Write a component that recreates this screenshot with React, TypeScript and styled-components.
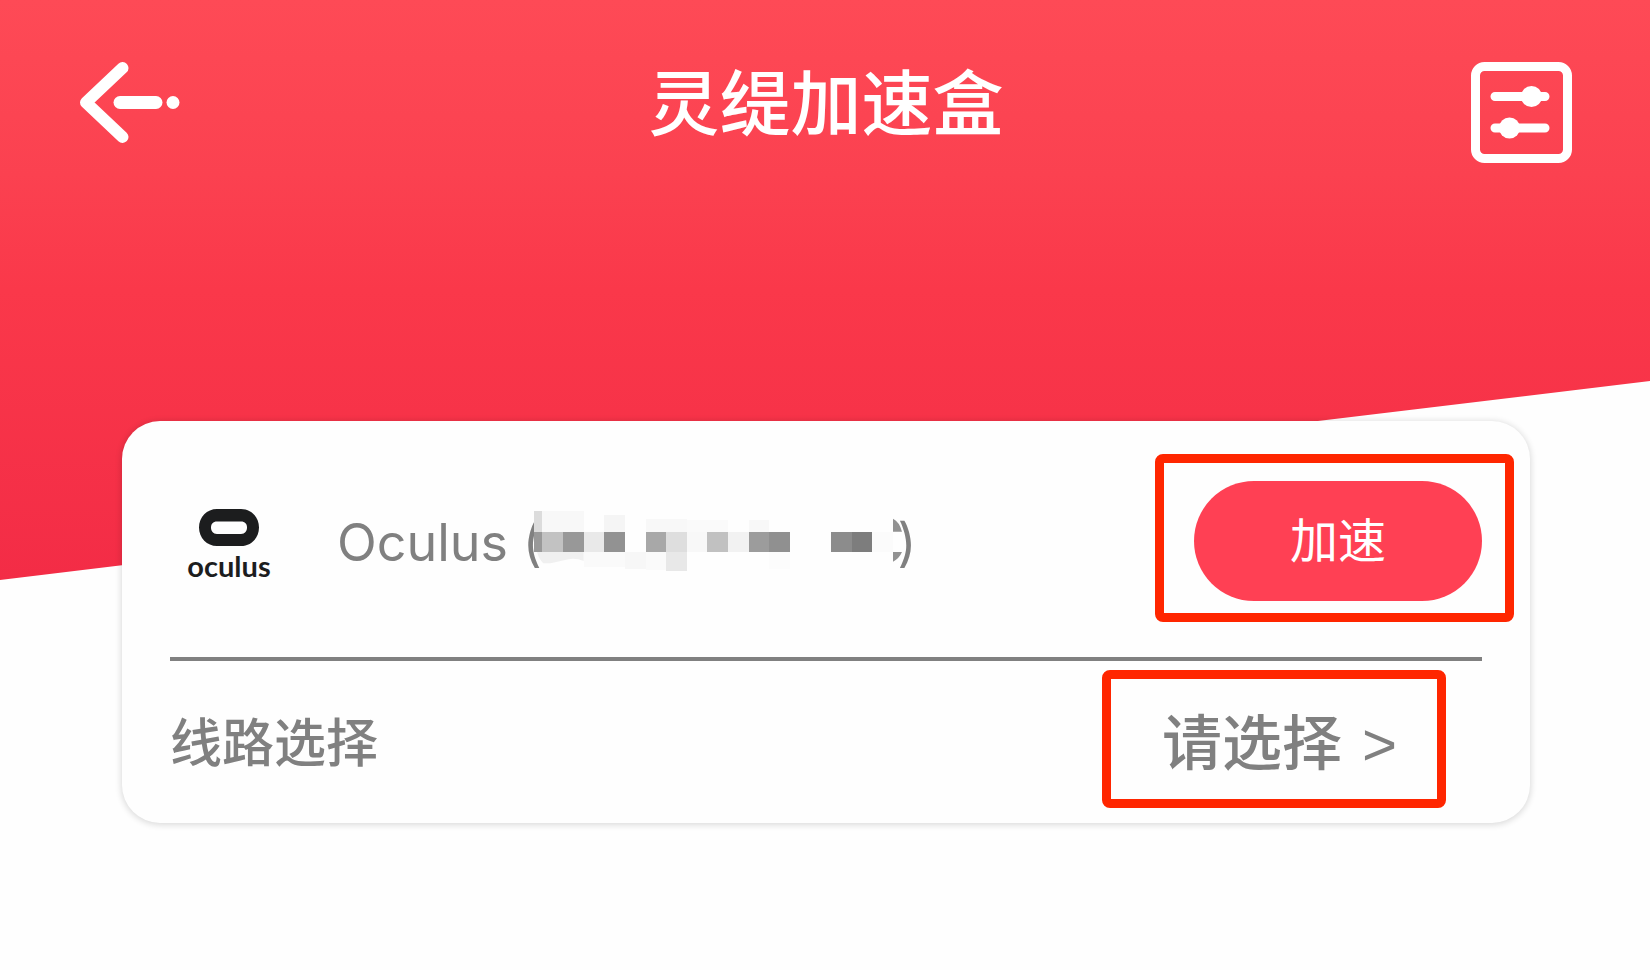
import React from "react";
import styled, { createGlobalStyle } from "styled-components";

const GlobalStyle = createGlobalStyle`
  *, *::before, *::after { box-sizing: border-box; }
  body {
    margin: 0;
    background: #fefefe;
    font-family: Inter, "Noto Sans CJK SC", sans-serif;
  }
  button {
    margin: 0;
    padding: 0;
    border: 0;
    background: none;
    font-family: inherit;
    cursor: pointer;
  }
`;

const Page = styled.div`
  min-height: 100vh;
`;

const Hero = styled.header`
  height: 580px;
  background: linear-gradient(#fe4a56 0%, #fb4150 30%, #fa384a 50%, #f32c46 100%);
  clip-path: polygon(0 0, 100% 0, 100% 381px, 0 100%);
`;

const TitleBar = styled.div`
  display: grid;
  grid-template-columns: 1fr auto 1fr;
  align-items: start;
  padding: 62px 78px 0 80px;
`;

const Title = styled.h1`
  margin: 0;
  color: #fff;
  font-size: 71px;
  font-weight: 500;
  line-height: 82px;
`;

const IconButton = styled.button<{ $end?: boolean }>`
  justify-self: ${(p) => (p.$end ? "end" : "start")};
  color: #fff;
  svg { display: block; }
`;

const Card = styled.main`
  position: relative;
  margin: -159px 120px 0 122px;
  border-radius: 38px;
  background: #fefefe;
  box-shadow: 0 1px 6px 1px rgba(0, 0, 0, 0.14);
`;

const Row = styled.section<{ $pad: string }>`
  display: flex;
  align-items: center;
  padding: ${(p) => p.$pad};
`;

const Divider = styled.hr`
  height: 4px;
  margin: 0 48px;
  border: 0;
  background: #808080;
`;

const Logo = styled.div`
  display: flex;
  flex-direction: column;
  align-items: center;
  width: 84px;
  margin-right: 66px;
  padding-top: 18px;
  color: #1c1d1e;
  svg { display: block; }
`;

const LogoName = styled.span`
  font-family: Lato, sans-serif;
  font-size: 29px;
  font-weight: 700;
  line-height: 40px;
`;

const Name = styled.h2`
  display: flex;
  flex: 1;
  align-items: center;
  margin: 0;
  padding-top: 10px;
  color: #808080;
  font-size: 52px;
  font-weight: 400;
  line-height: 64px;
  white-space: pre;
`;

const Mosaic = styled.svg`
  margin: 0 -4px 4px -8px;
`;

const Highlight = styled.div<{ $pad: string }>`
  padding: ${(p) => p.$pad};
  border: 9px solid #ff2600;
  border-radius: 8px;
`;

const BoostButton = styled.button`
  display: block;
  width: 288px;
  height: 120px;
  border-radius: 60px;
  background: #ff4054;
  color: #fff;
  font-size: 48px;
  line-height: 64px;
`;

const Label = styled.span`
  flex: 1;
  padding-top: 10px;
  color: #808080;
  font-size: 52px;
  font-weight: 500;
  line-height: 64px;
`;

const RouteButton = styled.button`
  display: flex;
  align-items: baseline;
  gap: 20px;
  color: #808080;
  font-size: 60px;
  font-weight: 500;
  line-height: 104px;
`;

const Chevron = styled.span`
  font-family: "Liberation Sans", sans-serif;
  font-weight: 400;
`;

/* Each cell: x, y, width, height, grey level */
const cells: [number, number, number, number, string][] = [
  [0, 0, 24, 63, "#dcdcdc"],
  [24, 0, 125, 63, "#f8f8f8"],
  [210, 13, 62, 50, "#f5f5f5"],
  [336, 23, 124, 40, "#f8f8f8"],
  [460, 26, 122, 37, "#fafafa"],
  [645, 26, 60, 37, "#f8f8f8"],
  [0, 63, 24, 60, "#999999"],
  [24, 63, 63, 60, "#c2c2c2"],
  [87, 63, 62, 60, "#989898"],
  [149, 63, 61, 60, "#e9e9e9"],
  [210, 63, 62, 60, "#929292"],
  [336, 63, 60, 60, "#a8a8a8"],
  [396, 63, 62, 60, "#dedede"],
  [458, 63, 61, 60, "#f8f8f8"],
  [519, 63, 62, 60, "#c1c1c1"],
  [581, 63, 64, 60, "#f2f2f2"],
  [645, 63, 60, 60, "#9c9c9c"],
  [705, 63, 63, 60, "#909090"],
  [891, 63, 63, 60, "#8c8c8c"],
  [954, 63, 60, 60, "#7d7d7d"],
  [1014, 63, 62, 60, "#fbfbfb"],
  [149, 123, 124, 45, "#fafafa"],
  [273, 123, 62, 50, "#f7f7f7"],
  [335, 123, 61, 54, "#fafafa"],
  [396, 123, 62, 58, "#e8e8e8"],
  [705, 123, 63, 52, "#fcfcfc"],
];

const BackIcon = () => (
  <svg width="100" height="84" viewBox="80 62 100 84" fill="none" stroke="currentColor" strokeLinecap="round" strokeLinejoin="round">
    <path d="M122.500 68 L86 102.500 L122.500 137" strokeWidth="12" />
    <path d="M120 102.500 H156" strokeWidth="13" />
    <circle cx="173" cy="102.500" r="6.500" fill="currentColor" stroke="none" />
  </svg>
);

const TuneIcon = () => (
  <svg width="101" height="101" viewBox="0 0 101 101" fill="none" stroke="currentColor" strokeWidth="9" strokeLinecap="round">
    <rect x="4.500" y="4.500" width="92" height="92" rx="9" />
    <path d="M24 34.500 H74 M24 66 H74" />
    <g fill="currentColor" stroke="none">
      <circle cx="60.500" cy="34.500" r="10.500" />
      <circle cx="38.500" cy="66" r="10.500" />
    </g>
  </svg>
);

export default function App() {
  return (
    <Page>
      <GlobalStyle />
      <Hero>
        <TitleBar>
          <IconButton type="button" aria-label="返回">
            <BackIcon />
          </IconButton>
          <Title>灵缇加速盒</Title>
          <IconButton type="button" aria-label="设置" $end>
            <TuneIcon />
          </IconButton>
        </TitleBar>
      </Hero>
      <Card>
        <Row $pad="33px 16px 35px 65px">
          <Logo>
            <svg width="60" height="37" viewBox="0 0 60 37" aria-hidden="true">
              <path
                fill="currentColor"
                fillRule="evenodd"
                d="M18 0H42C52 0 60 8 60 18.500S52 37 42 37H18C8 37 0 29 0 18.500S8 0 18 0ZM18 12.500C14 12.500 12 15 12 18.500S14 25 18 25H42C46 25 48 22 48 18.500S46 12.500 42 12.500Z"
              />
            </svg>
            <LogoName>oculus</LogoName>
          </Logo>
          <Name>
            <span>Oculus (</span>
            <Mosaic width="368" height="61" viewBox="0 0 1104 183" aria-hidden="true">
              <path d="M0 0H150L336 23H1076L1104 45V140L1076 166L700 183H396L150 165L30 152Q0 130 0 63Z" fill="#fefefe" />
              {cells.map(([x, y, w, h, fill]) => (
                <rect key={`${x}-${y}`} x={x} y={y} width={w} height={h} fill={fill} shapeRendering="crispEdges" />
              ))}
              <path d="M9 123H149V150Q120 138 90 148L50 157H28Q16 146 9 123Z" fill="#f0f0f0" />
              <path d="M1077 23Q1096 32 1104 62H1077ZM1077 123H1104Q1096 142 1077 152Z" fill="#929292" />
            </Mosaic>
            <span>)</span>
          </Name>
          <Highlight $pad="18px 23px 12px 30px">
            <BoostButton type="button">加速</BoostButton>
          </Highlight>
        </Row>
        <Divider />
        <Row $pad="9px 84px 15px 48px">
          <Label id="route-label">线路选择</Label>
          <Highlight $pad="12px 40px 2px 51px">
            <RouteButton type="button" aria-describedby="route-label">
              <span>请选择</span>
              <Chevron>&gt;</Chevron>
            </RouteButton>
          </Highlight>
        </Row>
      </Card>
    </Page>
  );
}
